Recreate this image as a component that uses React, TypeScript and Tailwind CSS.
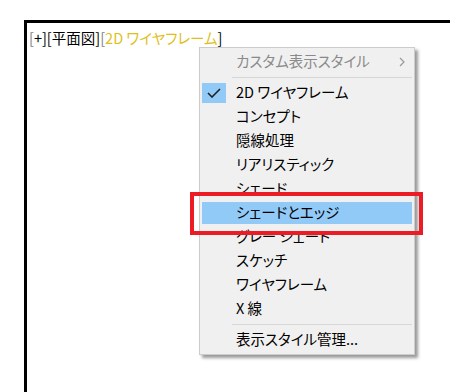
import React from 'react';

const font = "font-['Noto_Sans_CJK_JP','Noto_Sans',sans-serif] [font-feature-settings:'palt']";

const styles = [
  { label: '2D ワイヤフレーム', checked: true },
  { label: 'コンセプト' },
  { label: '隠線処理' },
  { label: 'リアリスティック' },
  { label: 'シェード' },
  { label: 'シェードとエッジ', active: true },
  { label: 'グレー シェード' },
  { label: 'スケッチ' },
  { label: 'ワイヤフレーム' },
  { label: 'X 線' },
];

const Check = () => (
  <svg width="14" height="10" viewBox="0 0 14 10" fill="none">
    <path d="M1 5 L5 9 L13 1" stroke="#202020" strokeWidth="1.6" />
  </svg>
);

const MenuItem = ({ label, checked, active }: { label: string; checked?: boolean; active?: boolean }) => (
  <div className="h-6 flex items-center px-[2px]">
    <div className={`h-[22px] flex-1 flex items-center ${active ? 'bg-[#91c9f7]' : ''}`}>
      <div className="w-[34px] flex items-center">
        {checked && (
          <div className="w-6 h-5 bg-[#91c9f7] flex items-center justify-center">
            <Check />
          </div>
        )}
      </div>
      <span className="text-[14.5px] text-black leading-none -mt-[2px]">{label}</span>
    </div>
  </div>
);

export default function App() {
  return (
    <div className={`w-[450px] h-[392px] bg-white relative overflow-hidden ${font}`}>
      {/* viewport frame */}
      <div className="ml-6 mt-5 h-[400px] border-l-[3px] border-t-[3px] border-black pl-[2px] pt-[5px]">
        <div className="text-[14.5px] leading-5 text-black whitespace-nowrap">
          <span className="text-[#808080]">[</span>+][
          <span>平面図</span>]<span className="text-[#808080]">[</span>
          <span className="text-[#e0bf1c]">2D ワイヤフレーム</span>]
        </div>
      </div>

      {/* context menu */}
      <div className="absolute left-[199px] top-[47px] w-[216px] bg-[#f0f0f0] border border-[#cccccc] shadow-[3px_3px_3px_rgba(0,0,0,0.4)] py-[2px]">
        <div className="h-6 flex items-center pl-[36px] pr-[9px]">
          <span className="flex-1 text-[14.5px] text-[#8a8a8a] leading-none -mt-[2px]">カスタム表示スタイル</span>
          <svg width="6" height="10" viewBox="0 0 6 10" fill="none">
            <path d="M1 1 L5 5 L1 9" stroke="#9a9a9a" strokeWidth="1.2" />
          </svg>
        </div>
        <div className="h-[7px] flex items-center pl-8 pr-[2px]">
          <div className="h-px flex-1 bg-[#d7d7d7]" />
        </div>
        {styles.map((s, i) => (
          <MenuItem key={i} {...s} />
        ))}
        <div className="h-[7px] flex items-center pl-8 pr-[2px]">
          <div className="h-px flex-1 bg-[#d7d7d7]" />
        </div>
        <div className="h-6 flex items-center pl-[36px]">
          <span className="text-[14.5px] text-black leading-none -mt-[2px]">表示スタイル管理...</span>
        </div>
      </div>

      {/* red highlight frame */}
      <div className="absolute left-[190px] top-[192px] w-[233px] h-[43px] border-4 border-[#ec1c24]" />
    </div>
  );
}
